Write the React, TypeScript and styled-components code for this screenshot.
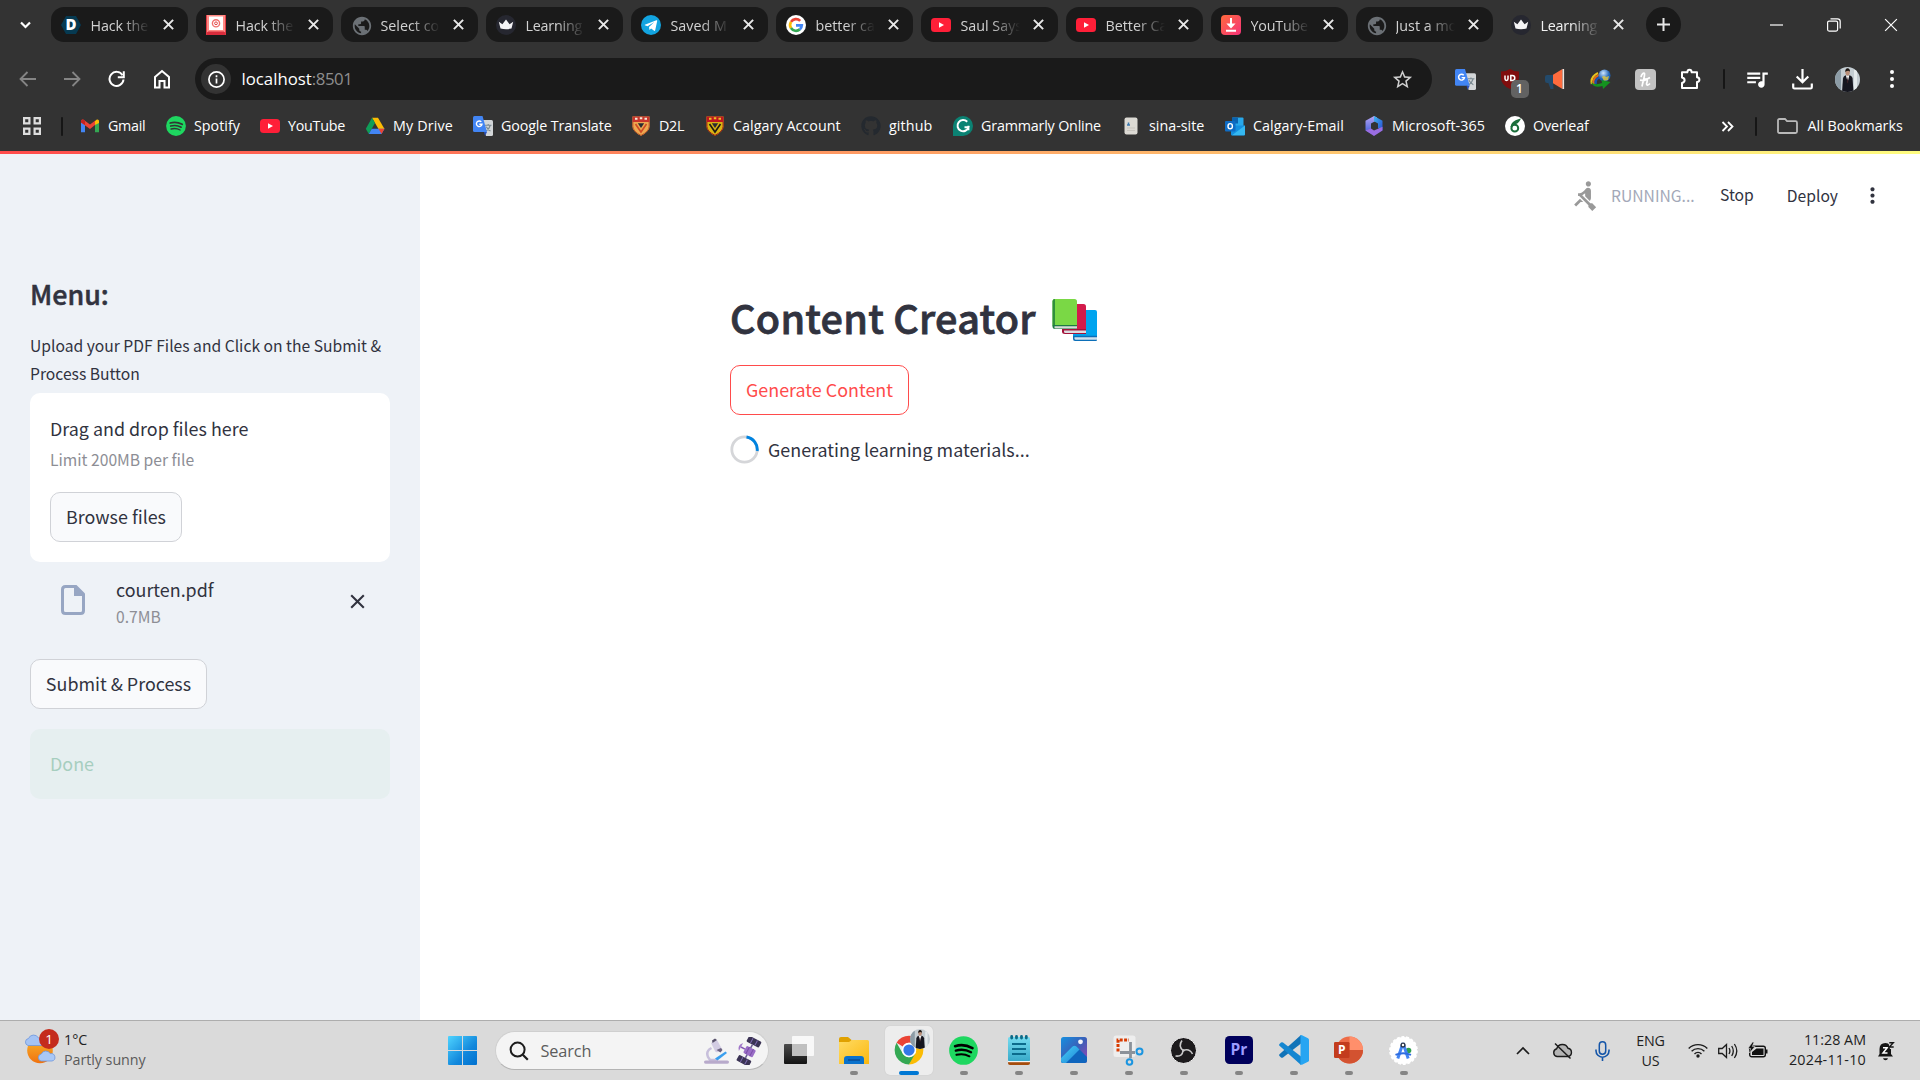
import React from 'react';
import styled, { createGlobalStyle, css } from 'styled-components';
import { MdRowing, MdQueueMusic, MdPublic, MdMoreVert, MdStarBorder } from 'react-icons/md';
import { FaGithub } from 'react-icons/fa';

const ui = `"Open Sans", "Noto Sans", sans-serif`;
const app = `"Noto Sans CJK SC", "Noto Sans", sans-serif`;

const GlobalStyle = createGlobalStyle`
  *, *::before, *::after { box-sizing: border-box; }
  body { margin: 0; background: #fff; overflow: hidden; }
  button { font: inherit; cursor: pointer; }
  p, h1, h2 { margin: 0; }
  svg { display: block; flex: none; }
`;

const Desktop = styled.div`
  width: 1920px;
  height: 1080px;
  display: flex;
  flex-direction: column;
  overflow: hidden;
`;

/* ---------- browser chrome ---------- */
const Chrome = styled.header`
  height: 151px;
  flex: none;
  background: #333;
  color: #fff;
  font: 14.3px/20px ${ui};
`;
const TitleBar = styled.div`
  display: flex;
  height: 50px;
  padding-top: 7px;
  align-items: flex-start;
`;
const TabSearch = styled.div`
  width: 50.5px;
  height: 35px;
  display: grid;
  place-items: center;
`;
const Tab = styled.div<{ $active?: boolean }>`
  width: 137.5px;
  height: 35px;
  margin-right: 7.5px;
  padding: 0 14px 0 10px;
  display: flex;
  align-items: center;
  border-radius: 13px;
  background: ${(p) => (p.$active ? 'transparent' : '#1a1a1a')};
  color: ${(p) => (p.$active ? '#f2f2f2' : '#d2d2d2')};
`;
const TabTitle = styled.span<{ $track?: number }>`
  width: 68px;
  margin: 2px 0 0 10px;
  white-space: nowrap;
  letter-spacing: ${(p) => p.$track ?? 0}px;
  mask-image: linear-gradient(90deg, #000 30px, transparent 59px);
`;
const TabClose = styled.span`
  margin-left: auto;
  display: grid;
  place-items: center;
`;
const NewTab = styled.div`
  width: 35px;
  height: 35px;
  margin-left: 0.5px;
  border-radius: 50%;
  background: #1a1a1a;
  display: grid;
  place-items: center;
`;
const WindowControls = styled.div`
  margin-left: auto;
  display: flex;
`;
const WindowButton = styled.div`
  width: 57.5px;
  height: 35px;
  display: grid;
  place-items: center;
`;
const Toolbar = styled.div`
  height: 58px;
  padding-left: 5px;
  display: flex;
  align-items: center;
`;
const ToolCell = styled.div`
  width: 45px;
  height: 42px;
  display: grid;
  place-items: center;
  position: relative;
`;
const Omnibox = styled.div`
  width: 1237px;
  height: 42px;
  margin: 0 10.5px 0 10px;
  padding: 0 18px 0 6px;
  border-radius: 21px;
  background: #1a1a1a;
  display: flex;
  align-items: center;
`;
const SiteInfo = styled.div`
  width: 30px;
  height: 30px;
  border-radius: 50%;
  background: #333;
  display: grid;
  place-items: center;
`;
const Url = styled.div`
  flex: 1;
  padding-left: 10.5px;
  font-size: 16.8px;
  line-height: 24px;
`;
const Port = styled.span`
  color: #8e8e8e;
  letter-spacing: -0.45px;
`;
const Divider = styled.span<{ $h: number; $gapLeft: number; $gapRight: number }>`
  width: 2px;
  height: ${(p) => p.$h}px;
  margin: 0 ${(p) => p.$gapRight}px 0 ${(p) => p.$gapLeft}px;
  background: #161616;
  border-radius: 1px;
`;
const Badge = styled.span`
  position: absolute;
  left: 23px;
  top: 22px;
  width: 18px;
  height: 18px;
  border-radius: 5px;
  background: #626262;
  text-align: center;
  font: 600 12px/18px ${ui};
`;
const BookmarkBar = styled.div`
  height: 36px;
  display: flex;
  align-items: center;
  padding: 0 0 0 23px;
`;
const Bookmark = styled.div<{ $w: number; $track?: number }>`
  width: ${(p) => p.$w}px;
  flex: none;
  display: flex;
  align-items: center;
  gap: 8px;
  white-space: nowrap;
  letter-spacing: ${(p) => p.$track ?? 0}px;
`;
const Favicon = styled.span`
  width: 20px;
  height: 20px;
  display: grid;
  place-items: center;
  flex: none;
`;
const Overflow = styled.div`
  margin-left: auto;
`;
const AllBookmarks = styled.div`
  width: 143px;
  display: flex;
  align-items: center;
  gap: 9.5px;
  white-space: nowrap;
`;

/* ---------- streamlit page ---------- */
const LoadingStrip = styled.div`
  height: 3px;
  flex: none;
  background: linear-gradient(90deg, #ff4b4b, #fffd80);
`;
const Page = styled.div`
  flex: 1;
  min-height: 0;
  display: flex;
  font: 17.9px/30px ${app};
  color: #31333f;
`;
const Sidebar = styled.aside`
  width: 420px;
  padding: 122px 30px 0;
  background: #eef2f7;
`;
const MenuTitle = styled.h2`
  font-size: 26.85px;
  line-height: 36px;
  font-weight: 500;
  -webkit-text-stroke: 0.5px currentColor;
`;
const UploadLabel = styled.p`
  margin-top: 20px;
  font-size: 15.66px;
  line-height: 28px;
  white-space: nowrap;
`;
const DropZone = styled.section`
  height: 169px;
  margin-top: 5px;
  padding: 20px;
  border-radius: 10px;
  background: #fff;
`;
const Small = styled.p<{ $lh: number }>`
  font-size: 15.66px;
  line-height: ${(p) => p.$lh}px;
  color: #8d8e95;
`;
const DropHint = styled(Small)`
  margin: 3px 0 18px;
`;
const Button = styled.button<{ $w: number; $hot?: boolean }>`
  display: block;
  width: ${(p) => p.$w}px;
  height: 50px;
  padding: 0 0 3px;
  border: 1px solid #d0d2d7;
  border-radius: 10px;
  background: #f9fafc;
  color: inherit;
  white-space: nowrap;
  ${(p) => p.$hot && css`
    border-color: #ff4b4b;
    background: #fff;
    color: #ff4b4b;
  `}
`;
const FileRow = styled.div`
  height: 51px;
  margin: 15px 0 31px;
  padding: 0 25px 0 31px;
  display: flex;
  align-items: flex-start;
`;
const FileGlyph = styled.span`
  margin: 8px 31px 0 0;
`;
const FileMeta = styled.div`
  flex: 1;
  display: flex;
  flex-direction: column;
  gap: 4px;
`;
const FileName = styled.p`
  line-height: 24px;
`;
const RemoveFile = styled.span`
  margin-top: 17px;
`;
const DoneAlert = styled.div`
  height: 70px;
  margin-top: 20px;
  padding: 0 20px 1px;
  border-radius: 10px;
  background: #e6eff0;
  color: #a6cebf;
  line-height: 69px;
`;
const Main = styled.main`
  flex: 1;
  background: #fff;
`;
const StatusBar = styled.div`
  height: 83px;
  padding-right: 35px;
  display: flex;
  align-items: center;
  justify-content: flex-end;
  font-size: 15.66px;
`;
const Running = styled.span`
  width: 84px;
  margin: 0 25px 0 11px;
  color: #a3a8b8;
`;
const Stop = styled.span`
  margin: -1px 33px 0 0;
`;
const Deploy = styled.span`
  margin-right: 22px;
`;
const Content = styled.div`
  width: 880px;
  margin: 47px auto 0;
`;
const Title = styled.h1`
  display: flex;
  align-items: center;
  height: 66px;
  font-size: 39.6px;
  line-height: 66px;
  font-weight: 500;
  letter-spacing: 0.25px;
  -webkit-text-stroke: 0.8px currentColor;
  margin-bottom: 15px;
`;
const Emoji = styled.span`
  margin: 5px 0 0 16px;
  -webkit-text-stroke: 0;
`;
const SpinnerRow = styled.div`
  margin: 20px 0 0 -0.5px;
  display: flex;
  align-items: center;
  gap: 9.5px;
`;
const SpinnerText = styled.span`
  margin-top: -1px;
`;

/* ---------- taskbar ---------- */
const Taskbar = styled.footer`
  height: 60px;
  flex: none;
  display: flex;
  align-items: center;
  border-top: 1px solid #adadad;
  background: #dadada;
  color: #1f1f1f;
  font: 14.3px/20px ${ui};
`;
const Weather = styled.div`
  width: 447.5px;
  padding: 0 0 2px 24px;
  display: flex;
  align-items: center;
  gap: 4px;
`;
const WeatherIcon = styled.div`
  position: relative;
  width: 36px;
  height: 38px;
`;
const AlertCount = styled.span`
  position: absolute;
  left: 15px;
  top: -2px;
  width: 20px;
  height: 20px;
  border-radius: 50%;
  background: #c42b1c;
  color: #fff;
  text-align: center;
  font-size: 13.5px;
  line-height: 20px;
`;
const Muted = styled.div`
  color: #5a5a5a;
  letter-spacing: -0.05px;
`;
const SearchPill = styled.div`
  width: 274px;
  height: 39px;
  margin: 0 2.5px 0 18px;
  padding: 0 6px 0 13px;
  display: flex;
  align-items: center;
  border: 1px solid #cfcfcf;
  border-bottom-color: #b4b4b4;
  border-radius: 20px;
  background: #f4f4f4;
`;
const SearchText = styled.span`
  flex: 1;
  margin-left: 12px;
  font-size: 16.3px;
  line-height: 24px;
  letter-spacing: -0.1px;
  color: #5c5c5c;
`;
const SearchArt = styled.span`
  display: flex;
  align-items: center;
  gap: 5px;
`;
const AppCell = styled.div`
  width: 55px;
  height: 50px;
  display: grid;
  place-items: center;
`;
const AppTile = styled.div<{ $active?: boolean }>`
  width: 48px;
  height: 49px;
  display: flex;
  flex-direction: column;
  align-items: center;
  justify-content: space-between;
  border-radius: 5px;
  ${(p) => p.$active && css`
    background: #ededed;
    box-shadow: 0 0 1px #bbb;
  `}
`;
const AppIcon = styled.div`
  height: 45px;
  padding-top: 3px;
  display: grid;
  place-items: center;
  position: relative;
`;
const Indicator = styled.i<{ $active?: boolean }>`
  width: ${(p) => (p.$active ? 20 : 8)}px;
  height: 4px;
  border-radius: 2px;
  background: ${(p) => (p.$active ? '#0078d4' : '#858585')};
`;
const ProfileOverlay = styled.div`
  position: absolute;
  left: 16px;
  top: 3px;
`;
const TrayCell = styled.div<{ $w: number }>`
  width: ${(p) => p.$w}px;
  display: grid;
  place-items: center;
`;
const Language = styled.div`
  width: 56px;
  text-align: center;
  letter-spacing: -0.2px;
`;
const Clock = styled.div`
  width: 89.5px;
  padding-bottom: 2px;
  text-align: right;
`;
const DateLine = styled.div`
  letter-spacing: 0.25px;
  white-space: nowrap;
`;
const Tray = styled.div`
  margin-left: 71.5px;
  display: flex;
  align-items: center;
`;

/* ---------- drawings ---------- */
type GProps = { w: number; h?: number; vb?: string; children: React.ReactNode };
const G = ({ w, h = w, vb, children }: GProps) => (
  <svg width={w} height={h} viewBox={vb ?? `0 0 ${w} ${h}`} fill="none">{children}</svg>
);
const Cross = ({ s, c = '#e8e8e8', sw = 2 }: { s: number; c?: string; sw?: number }) => (
  <G w={s} vb="0 0 10 10"><path d="M.8.8l8.4 8.4M9.2.8L.8 9.2" stroke={c} strokeWidth={(sw * 10) / s} /></G>
);
const Globe = () => <MdPublic size={22} color="#6b7075" />;
const Crown = () => (
  <G w={20}><circle cx="10" cy="10" r="10" fill="#262730" /><path d="M2.8 6.8l3.6 2.4L10 4.6l3.6 4.6 3.6-2.4-1.7 6.8q-5.5 1.2-11 0z" fill="#f4f4f6" /></G>
);
const YouTube = () => (
  <G w={20}><rect y="3" width="20" height="14" rx="3.5" fill="#ff1f38" /><path d="M8 7.2l5 2.8-5 2.8z" fill="#fff" /></G>
);
const Google = () => (
  <G w={20}><circle cx="10" cy="10" r="10" fill="#fff" />
    <g strokeWidth="2.7"><path d="M14.2 5.9A5.9 5.9 0 0 0 5 6.9" stroke="#ea4335" /><path d="M5 6.9a5.9 5.9 0 0 0 0 6.2" stroke="#fbbc05" /><path d="M5 13.1a5.9 5.9 0 0 0 8.8 1.3" stroke="#34a853" /><path d="M13.8 14.4a5.7 5.7 0 0 0 2-4.1H10" stroke="#4285f4" /></g></G>
);
const Telegram = () => (
  <G w={20}><circle cx="10" cy="10" r="10" fill="#12a4e0" /><path d="M3.8 9.8l11.6-4.6c.6-.2 1 .1.8.9l-2 9.2c-.1.6-.6.8-1.1.5l-3-2.2-1.6 1.5-.5-3.2 5.3-4.9-6.7 4.2-2.8-.9z" fill="#fff" /></G>
);
const Dorahacks = () => (
  <G w={20}><path d="M5 1h10l5 9-5 9H5l-5-9z" fill="#063a52" /><text x="4.6" y="15.4" fontFamily="Open Sans, sans-serif" fontSize="15" fontWeight="800" fill="#fff">D</text></G>
);
const RedBook = () => (
  <G w={20}><path d="M0 0h20v20H0z" fill="#e23b45" /><path d="M1 0h18v17H1z" fill="#ff8a84" /><path d="M2 16.500h16l1.500 3.500H.5z" fill="#d92c3c" /><path d="M3 1.500h14v13.500H3z" fill="#fff" /><circle cx="10" cy="8.300" r="3.600" stroke="#f0706e" strokeWidth="1.400" /><circle cx="10" cy="8.300" r="1.400" stroke="#e04848" strokeWidth="1" /></G>
);
const Downloader = () => (
  <G w={20}><defs><linearGradient id="dl" x1="0" y1="0" x2="1" y2="1"><stop stopColor="#ff6a3c" /><stop offset="1" stopColor="#f5337a" /></linearGradient></defs><rect width="20" height="20" rx="4" fill="url(#dl)" /><path d="M10 3v8M5 15.8h10" stroke="#fff" strokeWidth="2" /><path d="M5.4 8.600h9.200L10 13.600z" fill="#fff" /></G>
);
const Gmail = () => (
  <G w={20}><path d="M1 4.5v11.800h4V9z" fill="#4285f4" /><path d="M19 4.500v11.800h-4V9z" fill="#34a853" /><path d="M15 9V5l1.500-1.200c1.200-.8 2.500 0 2.500 1.400V7z" fill="#fbbc04" /><path d="M1 5.200C1 3.800 2.400 3 3.600 3.800L10 8.600l5-3.800V9l-5 4-9-6.600z" fill="#ea4335" /><path d="M1 5.200C1 3.800 2.400 3 3.600 3.800L5 4.900V9L1 6.400z" fill="#c5221f" /></G>
);
const Spotify = ({ s = 20, dark = '#333' }: { s?: number; dark?: string }) => (
  <G w={s} vb="0 0 20 20"><circle cx="10" cy="10" r="9.900" fill="#1ed760" /><g stroke={dark} strokeLinecap="round"><path d="M4.200 7q6-1.900 12 1.300" strokeWidth="1.800" /><path d="M4.700 10.100q5.500-1.600 10.500 1.100" strokeWidth="1.600" /><path d="M5.100 13q4.800-1.300 9 1" strokeWidth="1.400" /></g></G>
);
const Drive = () => (
  <G w={20}><path d="M7 1.800h6l6.500 11.200h-6z" fill="#fbbc04" /><path d="M7 1.800L.8 12.700l3 5.300 6.200-11z" fill="#0f9d58" /><path d="M6.800 12.800h12.700l-3 5.200H3.800z" fill="#4285f4" /><path d="M13.500 12.800h6l-3 5.200z" fill="#ea4335" /></G>
);
const Translate = ({ s = 20 }: { s?: number }) => (
  <G w={s} vb="0 0 20 20"><path d="M9 4h9.500q1.500 0 1.500 1.500v13q0 1.500-1.500 1.500H13z" fill="#d3d6d8" /><path d="M12 9.300h6.500M15.200 8v1.300M17.200 9.500q-1 3.600-4 5.400M13.300 10.800q1.300 2.800 4.200 4.200" stroke="#7b8a92" strokeWidth="1.100" /><path d="M1.500 0h8L14 16H1.500Q0 16 0 14.500v-13Q0 0 1.500 0z" fill="#4285f4" /><path d="M11 16h3l-2 4z" fill="#2b50b8" /><path d="M8.300 5.900a2.800 2.800 0 1 0 .7 2.300H6.300" stroke="#fff" strokeWidth="1.400" /></G>
);
const Crest = ({ alt = false }: { alt?: boolean }) => (
  <G w={20}><path d="M1.500.5h17v10q0 5-8.500 9.300Q1.500 15.500 1.500 10.500z" fill={alt ? '#d8b312' : '#eda850'} /><path d="M1.500.5h17v5.500h-17z" fill={alt ? '#c01620' : '#c9342c'} /><path d="M4 2.800h2.500M8.800 2.300h2.500M13.500 2.800H16" stroke={alt ? '#e9c325' : '#f5e9d8'} strokeWidth="2" /><path d="M4.500 8l5.500 8 5.500-8" stroke={alt ? '#1d1a14' : '#cf4a24'} strokeWidth="1.600" /><path d="M6.800 7.300h6.400L10 12z" fill="#2a2c34" /><path d="M1.900 6v4.500q0 4.800 8.100 8.900 8.100-4.100 8.100-8.900V6" stroke={alt ? '#a31d1a' : '#c25a2a'} strokeWidth="1" /></G>
);
const Grammarly = () => (
  <G w={20}><path d="M10 0a10 10 0 1 1 0 20H0V10A10 10 0 0 1 10 0z" fill="#0b8273" /><path d="M14.200 5.800A5.600 5.600 0 1 0 15.500 11.200H11.500M15.400 9.800v4.500" stroke="#fff" strokeWidth="2" /></G>
);
const SiteDoc = () => (
  <G w={20}><rect x="3.500" y="1.500" width="13" height="17" rx="2" fill="#dcdad4" /><path d="M6 9h3M7.500 6.500v3" stroke="#3c7ab0" strokeWidth="1.500" /><path d="M6 12h8M6 14.500h8" stroke="#c9c6bf" /></G>
);
const Outlook = () => (
  <G w={20}><rect x="7" y="1.500" width="11.500" height="13" rx="1" fill="#28a8ea" /><rect x="7" y="1.500" width="6" height="6" fill="#0a63b0" /><path d="M6 9.500l14 0v9q0 1-1 1H7q-1 0-1-1z" fill="#1490df" /><path d="M20 9.500l-13 9.800h12q1 0 1-1z" fill="#35b8f1" /><rect y="5" width="10.500" height="10.500" rx="1" fill="#0f6cc4" /><ellipse cx="5.200" cy="10.200" rx="2.200" ry="2.600" stroke="#fff" strokeWidth="1.400" /></G>
);
const M365 = () => (
  <G w={20}><defs><linearGradient id="m1" x1="0" y1="0" x2="0" y2="1"><stop stopColor="#b8a5f4" /><stop offset="1" stopColor="#3f5fd8" /></linearGradient><linearGradient id="m2" x1="0" y1="0" x2="1" y2="1"><stop stopColor="#3fb9f2" /><stop offset="1" stopColor="#2a4bd0" /></linearGradient></defs><path d="M10 0L1.500 4.800v9.800L7 17.500V7.500l6-3.300V1.500z" fill="url(#m1)" /><path d="M10 0l8.500 4.800v9.800L14 12V7.500L10 5.200z" fill="url(#m2)" /><path d="M1.500 14.600L7 12.500l3 2 8.500-3.700v3.800L10 20z" fill="#9a6de2" /></G>
);
const Overleaf = () => (
  <G w={20}><circle cx="10" cy="10" r="10" fill="#fff" /><circle cx="9.800" cy="12.200" r="3.400" stroke="#1a6d3a" strokeWidth="2" /><path d="M6.300 11Q7 5.500 14.300 3.800 12.500 7.500 8 7.500" stroke="#1a6d3a" strokeWidth="1.800" /></G>
);
const Portrait = ({ s }: { s: number }) => (
  <G w={s} vb="0 0 25 25"><clipPath id={`pc${s}`}><circle cx="12.500" cy="12.500" r="12.500" /></clipPath><g clipPath={`url(#pc${s})`}><path d="M0 0h25v25H0z" fill="#c4cdd2" /><path d="M0 0h6v25H0z" fill="#8c9ca6" /><path d="M19 3h3v22h-3z" fill="#e4eaec" /><path d="M7 25L8 11.500q.5-3.200 4.700-3.500 4.300.3 4.900 3.500L18.500 25z" fill="#15161f" /><path d="M10.800 8.200h3.600L12.700 15z" fill="#f2f2f2" /><path d="M12.500 9.500l.8 5.500-.8 1.500-.7-1.500z" fill="#3a2026" /><ellipse cx="12.600" cy="5.200" rx="2.200" ry="3.200" fill="#b98e78" /><path d="M10.200 5Q10.200 1.200 12.600 1.200T15 5q-1.300-2.300-4.800 0z" fill="#1b1512" /></g></G>
);
const Reload = () => (
  <G w={19} h={18}><path d="M14.500 5.200A7 7 0 1 0 15.500 9.500" stroke="#fff" strokeWidth="2" /><path d="M15.800 1.200v6h-6" stroke="#fff" strokeWidth="2" /></G>
);
const Home = () => (
  <G w={20} h={20}><path d="M2 8L9 2l7 6v10.500h-4.500V12h-5v6.500H2z" stroke="#fff" strokeWidth="2" /></G>
);
const Arrow = ({ flip }: { flip?: boolean }) => (
  <G w={17} h={16}><path d={flip ? 'M0 8h15M8.500 1L15.500 8l-7 7' : 'M17 8H2M8.500 1L1.500 8l7 7'} stroke="#858585" strokeWidth="1.800" /></G>
);
const UBlock = () => (
  <G w={20}><path d="M10 0q4 2.500 9 2.500v6Q19 16 10 20 1 16 1 8.500v-6Q6 2.500 10 0z" fill="#800d0d" /><path d="M5 6.500v3.300q0 1.700 1.500 1.700T8 9.800V6.500M10.800 6.500v5h1.500q2.500 0 2.500-2.500t-2.500-2.500z" stroke="#fff" strokeWidth="1.500" /></G>
);
const Megaphone = () => (
  <G w={20}><path d="M0 8q0-2 2-2h6v8H2Q0 14 0 12z" fill="#234a6b" /><path d="M3 13h5l.5 7H5.500z" fill="#234a6b" /><path d="M8 5.800L17.500 0v20L8 14.300z" fill="#ff6b3d" /><path d="M18.300 0v20" stroke="#ece4e0" strokeWidth="1.600" /></G>
);
const Idm = () => (
  <G w={21}><defs><radialGradient id="idm" cx=".4" cy=".3"><stop stopColor="#cfe6ff" /><stop offset="1" stopColor="#1d62b5" /></radialGradient></defs><path d="M8 4Q0 8 1.800 15" stroke="#e9c21c" strokeWidth="2" /><path d="M9 6Q2 9 4 15" stroke="#e06a1c" strokeWidth="2" /><path d="M10 8Q4 11 6 15" stroke="#1b51b0" strokeWidth="2.500" /><circle cx="14.500" cy="6.500" r="6" fill="url(#idm)" /><path d="M12 8q2-2 4 0l3-1-1 4-4 1z" fill="#e6c93c" opacity=".8" /><path d="M1 13.500q5 3 11 .5l-.5-3L20.500 13l-7.500 7-.5-3Q4 19.500 1 13.500z" fill="#14931f" /></G>
);
const Honey = () => (
  <G w={21}><rect width="21" height="21" rx="4" fill="#c2c2c2" /><path d="M7 17.500C8 12 10 7 9.500 4.500 9 3 6.500 5 6 8M7.500 14Q10 9.500 11.500 10t0 5q.5 2.500 3.500-.5M5 11.200Q10 12 15 8.500" stroke="#fff" strokeWidth="1.700" /></G>
);
const Puzzle = () => (
  <G w={21} h={22}><path d="M2 4.300h5.300q.2-2.500 2.200-2.500t2.200 2.500H17V9.300q2.400.3 2.400 2.400T17 14.100v6H2v-5.200q2.600-.6 2.600-2.700T2 9.500z" stroke="#fff" strokeWidth="2" strokeLinejoin="round" /></G>
);
const Chevrons = () => <G w={13} h={11}><path d="M1.500 1L6 5.500 1.500 10M7 1l4.500 4.500L7 10" stroke="#fff" strokeWidth="1.800" /></G>;
const Folder = () => <G w={21} h={16}><path d="M1 2.500Q1 1 2.500 1H8l2 2.200h8.500Q20 3.200 20 4.700v8.800q0 1.500-1.500 1.500h-16Q1 15 1 13.500z" stroke="#b9b9b9" strokeWidth="1.800" /></G>;
const AppsGrid = () => <G w={18}><g stroke="#dedede" strokeWidth="2.200"><path d="M1.100 1.100h5.300v5.300H1.100zM11.600 1.100h5.300v5.300h-5.300zM1.100 11.600h5.300v5.300H1.100zM11.600 11.600h5.300v5.300h-5.300z" /></g></G>;

const Books = () => (
  <G w={45} h={42}>
    <path d="M21 34l3-23h19q2 0 2 2v24H21z" fill="#00a4ef" /><path d="M21 36.800h24v4q0 1.200-1 1.200H23q-2 0-2-2z" fill="#0c6fb8" /><path d="M22.500 38.300H45v2.400H23.500q-1.500-.2-1-2.400z" fill="#cfe0ee" />
    <path d="M10 30V7l8-2h13.500Q34 5 34 7.500V31H10z" fill="#d31b4b" /><path d="M10 30h24v5H13q-3 0-3-2.500z" fill="#a3123a" /><path d="M12 31.500h22v2.500H13q-1.500-.3-1-2.500z" fill="#dcdce0" />
    <path d="M.5 26V2Q.5 0 3 0h19.500Q25 0 25 2.500V27H.5z" fill="#7ad845" /><path d="M.5 26V2Q.5 0 3 0v27z" fill="#2f8f3c" /><path d="M.5 26H25v4H3.500Q.5 30 .5 27.500z" fill="#1c7a44" /><path d="M2.500 27.300H25v2.200H3.500q-1.500 0-1-2.200z" fill="#d8dcd8" />
  </G>
);
const Spinner = () => (
  <G w={29}><circle cx="14.500" cy="14.500" r="12.700" stroke="#d5d6d9" strokeWidth="2.800" /><path d="M16.500 2a12.700 12.700 0 0 1 10.700 14" stroke="#0083e0" strokeWidth="2.900" /></G>
);

/* ---------- taskbar icons ---------- */
const SunCloud = () => (
  <G w={36} h={38}><defs><linearGradient id="sun" x1="0" y1="0" x2="0" y2="1"><stop stopColor="#f9b52b" /><stop offset="1" stopColor="#f0720f" /></linearGradient></defs><circle cx="16" cy="19.500" r="12.800" fill="url(#sun)" /><path d="M4 14.500a3.600 3.600 0 0 1 .5-7 5.500 5.500 0 0 1 10-.5 4 4 0 0 1 3 7.500z" fill="#a4c3f4" stroke="#6f97dc" strokeWidth=".8" /><path d="M17 30a3.600 3.600 0 0 1 .3-7 5 5 0 0 1 9-.3 3.700 3.700 0 0 1 1.700 7.300z" fill="#a9c8f7" stroke="#6f97dc" strokeWidth=".8" /></G>
);
const Windows = () => (
  <G w={29}><defs><linearGradient id="win" x1="0" y1="0" x2="29" y2="29" gradientUnits="userSpaceOnUse"><stop stopColor="#4fd4ff" /><stop offset=".6" stopColor="#1288dc" /><stop offset="1" stopColor="#0070cf" /></linearGradient></defs><path d="M1 0h13v14H0V1q0-1 1-1zM15 0h13q1 0 1 1v13H15zM0 15h14v14H1q-1 0-1-1zM15 15h14v13q0 1-1 1H15z" fill="url(#win)" /></G>
);
const Lens = () => <G w={20}><circle cx="8.600" cy="8.600" r="7" stroke="#1c1c1c" strokeWidth="2" /><path d="M13.800 13.800l5 5" stroke="#1c1c1c" strokeWidth="2.200" /></G>;
const Microscope = () => (
  <G w={26} h={26}><path d="M7.500 10Q1.500 13 4 19l2 3h8" stroke="#c7bfdb" strokeWidth="2.500" /><path d="M7 5l6-3 5 9-4 3q-2 1-3-1z" fill="#d3cce3" /><path d="M12.500 12l4 2.500 2-2.500-1.500-2z" fill="#6b6280" /><path d="M8 2.500L11 .5l2 1.500-4.500 3z" fill="#57506a" /><path d="M11 20.500l10.500-7 1.500 1.500-9.500 7.500z" fill="#3a9fee" /><rect y="22.500" width="25" height="3.200" rx="1.600" fill="#b8aacb" /></G>
);
const Satellite = () => (
  <G w={27} h={28}><g transform="rotate(28 13.500 14)"><rect x="7" y="0" width="14" height="6.500" rx="1.200" fill="#3b3354" /><rect x="7" y="21.500" width="14" height="6.500" rx="1.200" fill="#3b3354" /><path d="M11.500.5v5.500M16.500.5v5.500M11.500 22v5.500M16.500 22v5.500" stroke="#7d6bb0" /><path d="M14 6.500v15" stroke="#6b5c92" strokeWidth="1.500" /><rect x="9.500" y="10" width="10.500" height="8" rx="1.200" fill="#9a6dc6" /><path d="M12.500 10v8M17 10v8" stroke="#7a4ea8" /><path d="M9.500 14H5" stroke="#8658b5" strokeWidth="1.500" /><path d="M5 9.500q-4.500 4.500 0 9z" fill="#a177c9" /></g></G>
);
const TaskView = () => (
  <G w={30} h={28}><defs><linearGradient id="tv" x1="0" y1="0" x2="0" y2="1"><stop stopColor="#4c4c4c" /><stop offset="1" stopColor="#141414" /></linearGradient></defs><rect y="8" width="23" height="20" rx="1" fill="url(#tv)" /><rect x="8" width="22" height="20" rx="1" fill="#f8f8f8" /><rect x="8" y="8" width="15" height="12" fill="#c0c0c0" /></G>
);
const Explorer = () => (
  <G w={30} h={27}><defs><linearGradient id="ex" x1="0" y1="0" x2="1" y2="1"><stop stopColor="#ffdb63" /><stop offset="1" stopColor="#fbb80f" /></linearGradient></defs><path d="M0 2q0-2 2-2h7l3.500 3v4H0z" fill="#e0a100" /><path d="M0 5h10l3-2h15.500Q30 3 30 4.500V27H0z" fill="url(#ex)" /><path d="M5 27v-5q0-3 3-3h14q3 0 3 3v5z" fill="#0a72cc" /><path d="M9 23h12" stroke="#0a4d94" strokeWidth="1.500" /></G>
);
const ChromeLogo = () => (
  <G w={30} vb="0 0 48 48"><path d="M4.100 12.500A23 23 0 0 1 43.900 12.500H24A11.500 11.500 0 0 0 14 18.300z" fill="#ea4335" /><path d="M4.100 12.500A23 23 0 0 0 24 47l10-11.600V29.700A11.500 11.500 0 0 1 14 29.700z" fill="#34a853" /><path d="M43.900 12.500A23 23 0 0 1 24 47l10-17.300A11.500 11.500 0 0 0 24 12.500z" fill="#fbbc05" /><circle cx="24" cy="24" r="11.500" fill="#fff" /><circle cx="24" cy="24" r="9" fill="#3478e8" /></G>
);
const Notepad = () => (
  <G w={22} h={30}><defs><linearGradient id="np" x1="0" y1="0" x2="0" y2="1"><stop stopColor="#76dcf0" /><stop offset="1" stopColor="#37a9c9" /></linearGradient></defs><rect y="2" width="22" height="24.500" rx="1.500" fill="url(#np)" /><path d="M0 26h22v2q0 2-2 2H2q-2 0-2-2z" fill="#a54c0c" /><path d="M0 26h22v1.200H0z" fill="#f5f5f5" /><path d="M3.700 1.500v1.500M8.500 1.500v1.500M13.500 1.500v1.500M18.300 1.500v1.500" stroke="#0c6a87" strokeWidth="2.800" strokeLinecap="round" /><path d="M4 9h14M4 14h14M4 19h14" stroke="#0b6b8c" strokeWidth="1.800" /></G>
);
const Photos = () => (
  <G w={26}><defs><linearGradient id="ph" x1="0" y1="0" x2="1" y2="1"><stop stopColor="#1590e0" /><stop offset=".5" stopColor="#3a5fb8" /><stop offset="1" stopColor="#9b45b5" /></linearGradient><linearGradient id="ph2" x1="0" y1="0" x2="1" y2="1"><stop stopColor="#48cff5" /><stop offset="1" stopColor="#1d84d8" /></linearGradient></defs><rect width="26" height="26" rx="2.500" fill="url(#ph)" /><path d="M0 21L11.500 9.500q2-1.500 4 0L26 20v3.500q0 2.500-2.500 2.500h-21Q0 26 0 23.500z" fill="#0f65bd" /><path d="M0 21L11.500 9.500q2-1.500 4 0l3 3L5 26H2.500Q0 26 0 23.500z" fill="url(#ph2)" /><circle cx="19.500" cy="4.800" r="2.400" fill="#f2f4fb" /></G>
);
const Snip = () => (
  <G w={31} h={31}><rect x=".5" y=".5" width="22" height="21.500" rx="2.500" fill="#eeeeee" /><path d="M5 16.500V5h11" stroke="#d83b01" strokeWidth="3" strokeDasharray="3 1.400" /><path d="M17.500 7v16M7 17.500h15" stroke="#8b929a" strokeWidth="2.800" /><circle cx="26.500" cy="16.500" r="3" stroke="#1b95e0" strokeWidth="2" /><circle cx="16.500" cy="27" r="2.800" stroke="#1b95e0" strokeWidth="2" /></G>
);
const Obs = () => (
  <G w={27}><circle cx="13.500" cy="13.500" r="13" fill="#1d1b1d" stroke="#f3f3f3" /><g stroke="#c9c9c9" strokeWidth="1.600"><path d="M13 13.500Q8 9 12 3.500" /><path d="M13 13.500Q19.500 11 22.500 17" /><path d="M13 13.500Q12.500 20 5.500 19" /></g><circle cx="13.300" cy="13.500" r="1.300" fill="#c9c9c9" /></G>
);
const Premiere = () => (
  <G w={28}><rect width="28" height="28" rx="4.500" fill="#00005b" /><text x="14" y="19" textAnchor="middle" fontFamily="Open Sans, sans-serif" fontWeight="700" fontSize="15.500" fill="#9c9cff">Pr</text></G>
);
const VsCode = () => (
  <G w={30}><path d="M22 0v8.500L4 22.500Q3 23 2 22.500L.5 21q-.8-1 0-1.800z" fill="#1173b8" /><path d="M22 30v-8.500L4 7.500Q3 7 2 7.500L.5 9q-.8 1 0 1.800z" fill="#1486d1" /><path d="M21.500.2Q22 0 23 .3l6 2.900q1 .5 1 1.500v20.600q0 1-1 1.500l-6 2.900q-1 .3-1.500 0z" fill="#27a5f2" /></G>
);
const PowerPoint = () => (
  <G w={29} h={28}><circle cx="15.500" cy="14" r="13.500" fill="#ed6c47" /><path d="M15.500.5A13.500 13.500 0 0 1 29 14H15.500z" fill="#ff8f6b" /><path d="M29 14a13.500 13.500 0 0 1-27 0z" fill="#d35230" /><rect y="6" width="15.500" height="16" rx="1.300" fill="#c33c1d" /><text x="7.800" y="18.300" textAnchor="middle" fontFamily="Open Sans, sans-serif" fontWeight="700" fontSize="12" fill="#fff">P</text></G>
);
const AndroidStudio = () => (
  <G w={29}><circle cx="14.500" cy="14.500" r="13.500" fill="#fff" stroke="#fff" strokeWidth="1.800" strokeDasharray="3 1.700" /><circle cx="19.500" cy="14.500" r="2.800" fill="#2f9e4f" /><path d="M14 7L8.800 22.500M14 7l5.200 15.500" stroke="#4285f4" strokeWidth="3" /><path d="M6.500 18.800q7.500-3.300 15.500 0" stroke="#2f6de0" strokeWidth="2" /><circle cx="14" cy="9" r="1.900" fill="#fff" stroke="#2d3748" strokeWidth="1.400" /></G>
);

const tabs: { icon: React.ReactNode; title: string; track?: number }[] = [
  { icon: <Dorahacks />, title: 'Hack the', track: -0.1 },
  { icon: <RedBook />, title: 'Hack the', track: -0.1 },
  { icon: <Globe />, title: 'Select co' },
  { icon: <Crown />, title: 'Learning', track: -0.2 },
  { icon: <Telegram />, title: 'Saved M' },
  { icon: <Google />, title: 'better ca' },
  { icon: <YouTube />, title: 'Saul Says' },
  { icon: <YouTube />, title: 'Better Ca' },
  { icon: <Downloader />, title: 'YouTube', track: -0.2 },
  { icon: <Globe />, title: 'Just a mo' },
  { icon: <Crown />, title: 'Learning', track: -0.2 },
];

const bookmarks: { icon: React.ReactNode; label: string; w: number; track?: number }[] = [
  { icon: <Gmail />, label: 'Gmail', w: 86, track: -0.3 },
  { icon: <Spotify />, label: 'Spotify', w: 94 },
  { icon: <YouTube />, label: 'YouTube', w: 105, track: -0.25 },
  { icon: <Drive />, label: 'My Drive', w: 108, track: 0.15 },
  { icon: <Translate />, label: 'Google Translate', w: 158, track: -0.13 },
  { icon: <Crest />, label: 'D2L', w: 74, track: -0.3 },
  { icon: <Crest alt />, label: 'Calgary Account', w: 156, track: 0.05 },
  { icon: <FaGithub size={20} color="#24292f" />, label: 'github', w: 92, track: 0.1 },
  { icon: <Grammarly />, label: 'Grammarly Online', w: 168, track: -0.18 },
  { icon: <SiteDoc />, label: 'sina-site', w: 104 },
  { icon: <Outlook />, label: 'Calgary-Email', w: 139, track: 0.05 },
  { icon: <M365 />, label: 'Microsoft-365', w: 141, track: 0.05 },
  { icon: <Overleaf />, label: 'Overleaf', w: 90, track: -0.1 },
];

const apps: { icon: React.ReactNode; state: 'idle' | 'running' | 'active' }[] = [
  { icon: <TaskView />, state: 'idle' },
  { icon: <Explorer />, state: 'running' },
  { icon: <><ChromeLogo /><ProfileOverlay><Portrait s={20} /></ProfileOverlay></>, state: 'active' },
  { icon: <Spotify s={29} dark="#000" />, state: 'running' },
  { icon: <Notepad />, state: 'running' },
  { icon: <Photos />, state: 'running' },
  { icon: <Snip />, state: 'running' },
  { icon: <Obs />, state: 'running' },
  { icon: <Premiere />, state: 'running' },
  { icon: <VsCode />, state: 'running' },
  { icon: <PowerPoint />, state: 'running' },
  { icon: <AndroidStudio />, state: 'running' },
];

function BrowserChrome() {
  return (
    <Chrome>
      <TitleBar>
        <TabSearch><G w={11} h={8}><path d="M1 1.500L5.500 6 10 1.500" stroke="#fff" strokeWidth="2.200" /></G></TabSearch>
        {tabs.map((t, i) => (
          <Tab key={i} $active={i === tabs.length - 1}>
            <Favicon>{t.icon}</Favicon>
            <TabTitle $track={t.track}>{t.title}</TabTitle>
            <TabClose><Cross s={11} /></TabClose>
          </Tab>
        ))}
        <NewTab><G w={13}><path d="M6.500 0v13M0 6.500h13" stroke="#e8e8e8" strokeWidth="2" /></G></NewTab>
        <WindowControls>
          <WindowButton><G w={13} h={2}><path d="M0 1h13" stroke="#fff" strokeWidth="1.200" /></G></WindowButton>
          <WindowButton><G w={14}><rect x=".6" y="3.100" width="10" height="10" rx="1.500" stroke="#fff" strokeWidth="1.200" /><path d="M3.500 .8h7q2.700 0 2.700 2.700v7" stroke="#fff" strokeWidth="1.200" /></G></WindowButton>
          <WindowButton><Cross s={14} c="#fff" sw={1.2} /></WindowButton>
        </WindowControls>
      </TitleBar>
      <Toolbar>
        <ToolCell><Arrow /></ToolCell>
        <ToolCell><Arrow flip /></ToolCell>
        <ToolCell><Reload /></ToolCell>
        <ToolCell><Home /></ToolCell>
        <Omnibox>
          <SiteInfo><G w={17}><circle cx="8.500" cy="8.500" r="7.600" stroke="#fff" strokeWidth="1.700" /><path d="M8.500 7.500v5M8.500 4.300v1.900" stroke="#fff" strokeWidth="1.700" /></G></SiteInfo>
          <Url>localhost<Port>:8501</Port></Url>
          <MdStarBorder size={23} color="#cfcfcf" />
        </Omnibox>
        <ToolCell><Translate s={21} /></ToolCell>
        <ToolCell><UBlock /><Badge>1</Badge></ToolCell>
        <ToolCell><Megaphone /></ToolCell>
        <ToolCell><Idm /></ToolCell>
        <ToolCell><Honey /></ToolCell>
        <ToolCell><Puzzle /></ToolCell>
        <Divider $h={20} $gapLeft={10.5} $gapRight={9.5} />
        <ToolCell><MdQueueMusic size={26} /></ToolCell>
        <ToolCell><G w={21}><path d="M10.500 0v13M4.700 7.500l5.800 5.800 5.800-5.800M1.200 14.500v3.700q0 1.300 1.300 1.300h16q1.300 0 1.300-1.300v-3.700" stroke="#fff" strokeWidth="2.200" /></G></ToolCell>
        <ToolCell><Portrait s={25} /></ToolCell>
        <ToolCell><G w={4} h={18}><circle cx="2" cy="2" r="2" fill="#fff" /><circle cx="2" cy="9" r="2" fill="#fff" /><circle cx="2" cy="16" r="2" fill="#fff" /></G></ToolCell>
      </Toolbar>
      <BookmarkBar>
        <AppsGrid />
        <Divider $h={19} $gapLeft={19.5} $gapRight={17.5} />
        {bookmarks.map((b) => (
          <Bookmark key={b.label} $w={b.w} $track={b.track}><Favicon>{b.icon}</Favicon>{b.label}</Bookmark>
        ))}
        <Overflow><Chevrons /></Overflow>
        <Divider $h={19} $gapLeft={21} $gapRight={20} />
        <AllBookmarks><Folder />All Bookmarks</AllBookmarks>
      </BookmarkBar>
    </Chrome>
  );
}

function StreamlitPage() {
  return (
    <Page>
      <Sidebar>
        <MenuTitle>Menu:</MenuTitle>
        <UploadLabel>Upload your PDF Files and Click on the Submit &amp;<br />Process Button</UploadLabel>
        <DropZone>
          <p>Drag and drop files here</p>
          <DropHint $lh={28}>Limit 200MB per file</DropHint>
          <Button $w={132}>Browse files</Button>
        </DropZone>
        <FileRow>
          <FileGlyph><G w={24} h={30}><path d="M13.500 1.500h-9q-3 0-3 3v21q0 3 3 3h15q3 0 3-3V10z" stroke="#97a6c3" strokeWidth="3" /><path d="M13 0h2.500L24 8.500V11H13z" fill="#97a6c3" /></G></FileGlyph>
          <FileMeta><FileName>courten.pdf</FileName><Small $lh={24}>0.7MB</Small></FileMeta>
          <RemoveFile><Cross s={15} c="#31333f" sw={2.1} /></RemoveFile>
        </FileRow>
        <Button $w={177}>Submit &amp; Process</Button>
        <DoneAlert>Done</DoneAlert>
      </Sidebar>
      <Main>
        <StatusBar>
          <MdRowing size={31} color="#999" />
          <Running>RUNNING...</Running>
          <Stop>Stop</Stop>
          <Deploy>Deploy</Deploy>
          <MdMoreVert size={25} />
        </StatusBar>
        <Content>
          <Title>Content Creator<Emoji><Books /></Emoji></Title>
          <Button $w={179} $hot>Generate Content</Button>
          <SpinnerRow><Spinner /><SpinnerText>Generating learning materials...</SpinnerText></SpinnerRow>
        </Content>
      </Main>
    </Page>
  );
}

function WindowsTaskbar() {
  return (
    <Taskbar>
      <Weather>
        <WeatherIcon><SunCloud /><AlertCount>1</AlertCount></WeatherIcon>
        <div><div>1°C</div><Muted>Partly sunny</Muted></div>
      </Weather>
      <Windows />
      <SearchPill><Lens /><SearchText>Search</SearchText><SearchArt><Microscope /><Satellite /></SearchArt></SearchPill>
      {apps.map((a, i) => (
        <AppCell key={i}>
          <AppTile $active={a.state === 'active'}>
            <AppIcon>{a.icon}</AppIcon>
            {a.state !== 'idle' && <Indicator $active={a.state === 'active'} />}
          </AppTile>
        </AppCell>
      ))}
      <Tray>
        <TrayCell $w={40}><G w={14} h={9}><path d="M1 8l6-6 6 6" stroke="#1c1c1c" strokeWidth="1.700" /></G></TrayCell>
        <TrayCell $w={40}><G w={21} h={18}><path d="M5 14.500a4 4 0 0 1-.3-7.800A6 6 0 0 1 16 6.300a4.200 4.200 0 0 1 .3 8.200z" fill="#b5b5b5" stroke="#1c1c1c" strokeWidth="1.400" /><path d="M3 1.500l15.500 15" stroke="#1c1c1c" strokeWidth="1.500" /></G></TrayCell>
        <TrayCell $w={40}><G w={15} h={20}><rect x="4.300" y=".8" width="6.400" height="12.500" rx="3.200" stroke="#1455a8" strokeWidth="1.500" /><path d="M1 8.500v1.200a6.500 6.500 0 0 0 13 0V8.500M7.500 16.200V20" stroke="#1455a8" strokeWidth="1.600" /></G></TrayCell>
        <Language>ENG<br />US</Language>
        <TrayCell $w={38}><G w={20} h={15}><g stroke="#1c1c1c" strokeWidth="1.400"><path d="M.7 5.500a13 13 0 0 1 18.600 0M3.600 8.300a9 9 0 0 1 12.800 0M6.500 11a5 5 0 0 1 7 0" /></g><circle cx="10" cy="13" r="1.700" fill="#1c1c1c" /></G></TrayCell>
        <TrayCell $w={22}><G w={20} h={18}><path d="M.7 6.500h3.500L8.500 2.500v13L4.200 11.500H.7z" stroke="#1c1c1c" strokeWidth="1.300" /><path d="M11 6q1.800 3 0 6M13.700 4q3.200 5 0 10M16.400 2q4.800 7 0 14" stroke="#1c1c1c" strokeWidth="1.300" /></G></TrayCell>
        <TrayCell $w={38}><G w={20} h={17}><rect x="1.700" y="4.200" width="15.600" height="10.600" rx="2" stroke="#111" strokeWidth="1.400" /><path d="M4 10l4.500-3.500h7v6.500H4zM17.500 7.500h2v4h-2z" fill="#111" /><path d="M4.500 0L0 6.500h2.500L1.500 11 7 4.500H4.300L6 0z" fill="#111" stroke="#dadada" strokeWidth=".6" /></G></TrayCell>
        <Clock><div>11:28 AM</div><DateLine>2024-11-10</DateLine></Clock>
        <TrayCell $w={40}><G w={18} h={20}><path d="M1 15.500l1.500-2.500V8q0-6 6-6 5.500 0 5.500 6v5l2 2.500z" fill="#151515" /><path d="M6 17.200h5q-.5 2-2.500 2t-2.500-2z" fill="#151515" /><path d="M6 6.800h4.200L6 12h4.500" stroke="#fff" strokeWidth="1.500" /><path d="M11 .5h6.500V8H13z" fill="#dadada" /><path d="M12.300 1.700h4L12.300 6h4.400" stroke="#151515" strokeWidth="1.400" /></G></TrayCell>
      </Tray>
    </Taskbar>
  );
}

export default function App() {
  return (
    <>
      <GlobalStyle />
      <Desktop>
        <BrowserChrome />
        <LoadingStrip />
        <StreamlitPage />
        <WindowsTaskbar />
      </Desktop>
    </>
  );
}
